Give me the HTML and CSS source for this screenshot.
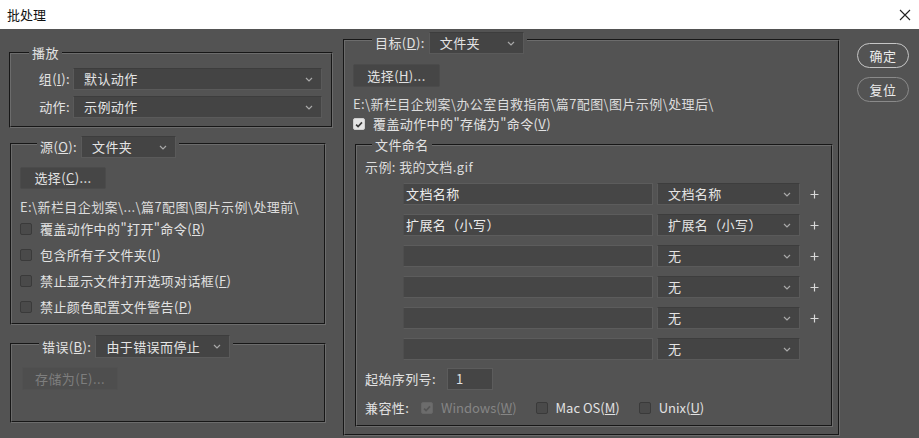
FILE: index.html
```html
<!DOCTYPE html>
<html lang="zh-CN">
<head>
<meta charset="utf-8">
<title>批处理</title>
<link rel="stylesheet" href="styles.css">
</head>
<body>
<header class="titlebar">
  <span class="title">批处理</span>
  <svg class="close" width="12" height="12" viewBox="0 0 12 12"><path d="M1 1L11 11M11 1L1 11" stroke="#222" stroke-width="1.1" fill="none"/></svg>
</header>
<main class="body">
  <div class="col-left">
    <fieldset class="group g-play">
      <legend class="lg-text lg-play">播放</legend>
      <div class="frow">
        <span class="flabel">组(<u>I</u>):</span>
        <div class="select sel-wide"><span>默认动作</span><svg class="chev" width="8" height="5" viewBox="0 0 8 5"><path d="M1 1L4 4L7 1" fill="none" stroke="#a9a9a9" stroke-width="1.2"/></svg></div>
      </div>
      <div class="frow">
        <span class="flabel">动作:</span>
        <div class="select sel-wide"><span>示例动作</span><svg class="chev" width="8" height="5" viewBox="0 0 8 5"><path d="M1 1L4 4L7 1" fill="none" stroke="#a9a9a9" stroke-width="1.2"/></svg></div>
      </div>
    </fieldset>

    <fieldset class="group g-src">
      <legend class="lg-ctl lg-src">
        <span>源(<u>O</u>):</span>
        <div class="select sel-folder"><span>文件夹</span><svg class="chev" width="8" height="5" viewBox="0 0 8 5"><path d="M1 1L4 4L7 1" fill="none" stroke="#a9a9a9" stroke-width="1.2"/></svg></div>
      </legend>
      <div class="btn btn-choose">选择(<u>C</u>)...</div>
      <div class="path">E:\新栏目企划案\...\篇7配图\图片示例\处理前\</div>
      <div class="cbrow"><span class="cb"></span><span>覆盖动作中的"打开"命令(<u>R</u>)</span></div>
      <div class="cbrow"><span class="cb"></span><span>包含所有子文件夹(<u>I</u>)</span></div>
      <div class="cbrow"><span class="cb"></span><span>禁止显示文件打开选项对话框(<u>F</u>)</span></div>
      <div class="cbrow"><span class="cb"></span><span>禁止颜色配置文件警告(<u>P</u>)</span></div>
    </fieldset>

    <fieldset class="group g-err">
      <legend class="lg-ctl lg-err">
        <span>错误(<u>B</u>):</span>
        <div class="select sel-err"><span>由于错误而停止</span><svg class="chev" width="8" height="5" viewBox="0 0 8 5"><path d="M1 1L4 4L7 1" fill="none" stroke="#a9a9a9" stroke-width="1.2"/></svg></div>
      </legend>
      <div class="btn btn-save">存储为(E)...</div>
    </fieldset>
  </div>

  <div class="col-right">
    <fieldset class="group g-target">
      <legend class="lg-ctl lg-target">
        <span>目标(<u>D</u>):</span>
        <div class="select sel-folder"><span>文件夹</span><svg class="chev" width="8" height="5" viewBox="0 0 8 5"><path d="M1 1L4 4L7 1" fill="none" stroke="#a9a9a9" stroke-width="1.2"/></svg></div>
      </legend>
      <div class="btn btn-choose2">选择(<u>H</u>)...</div>
      <div class="path path2">E:\新栏目企划案\办公室自救指南\篇7配图\图片示例\处理后\</div>
      <div class="cbrow cbrow-sm"><span class="cb on"><svg width="11" height="11" viewBox="0 0 11 11"><path d="M2.3 5.6L4.5 7.8L8.8 3.2" fill="none" stroke="#3a3a3a" stroke-width="1.8"/></svg></span><span>覆盖动作中的"存储为"命令(<u>V</u>)</span></div>

      <fieldset class="group g-naming">
        <legend class="lg-text lg-naming">文件命名</legend>
        <div class="example">示例: 我的文档.gif</div>
        <div class="nrows">
          <div class="nrow"><div class="tinput">文档名称</div><div class="select sel-name"><span>文档名称</span><svg class="chev" width="8" height="5" viewBox="0 0 8 5"><path d="M1 1L4 4L7 1" fill="none" stroke="#a9a9a9" stroke-width="1.2"/></svg></div><svg class="plus" width="9" height="9" viewBox="0 0 9 9"><path d="M4.5 0.5V8.5M0.5 4.5H8.5" stroke="#d8d8d8" stroke-width="1.2"/></svg></div>
          <div class="nrow"><div class="tinput">扩展名（小写）</div><div class="select sel-name"><span>扩展名（小写）</span><svg class="chev" width="8" height="5" viewBox="0 0 8 5"><path d="M1 1L4 4L7 1" fill="none" stroke="#a9a9a9" stroke-width="1.2"/></svg></div><svg class="plus" width="9" height="9" viewBox="0 0 9 9"><path d="M4.5 0.5V8.5M0.5 4.5H8.5" stroke="#d8d8d8" stroke-width="1.2"/></svg></div>
          <div class="nrow"><div class="tinput"></div><div class="select sel-name"><span>无</span><svg class="chev" width="8" height="5" viewBox="0 0 8 5"><path d="M1 1L4 4L7 1" fill="none" stroke="#a9a9a9" stroke-width="1.2"/></svg></div><svg class="plus" width="9" height="9" viewBox="0 0 9 9"><path d="M4.5 0.5V8.5M0.5 4.5H8.5" stroke="#d8d8d8" stroke-width="1.2"/></svg></div>
          <div class="nrow"><div class="tinput"></div><div class="select sel-name"><span>无</span><svg class="chev" width="8" height="5" viewBox="0 0 8 5"><path d="M1 1L4 4L7 1" fill="none" stroke="#a9a9a9" stroke-width="1.2"/></svg></div><svg class="plus" width="9" height="9" viewBox="0 0 9 9"><path d="M4.5 0.5V8.5M0.5 4.5H8.5" stroke="#d8d8d8" stroke-width="1.2"/></svg></div>
          <div class="nrow"><div class="tinput"></div><div class="select sel-name"><span>无</span><svg class="chev" width="8" height="5" viewBox="0 0 8 5"><path d="M1 1L4 4L7 1" fill="none" stroke="#a9a9a9" stroke-width="1.2"/></svg></div><svg class="plus" width="9" height="9" viewBox="0 0 9 9"><path d="M4.5 0.5V8.5M0.5 4.5H8.5" stroke="#d8d8d8" stroke-width="1.2"/></svg></div>
          <div class="nrow"><div class="tinput"></div><div class="select sel-name"><span>无</span><svg class="chev" width="8" height="5" viewBox="0 0 8 5"><path d="M1 1L4 4L7 1" fill="none" stroke="#a9a9a9" stroke-width="1.2"/></svg></div></div>
        </div>
        <div class="seqrow"><span class="seqlabel">起始序列号:</span><div class="seqinput">1</div></div>
        <div class="compat">
          <span class="compat-label">兼容性:</span>
          <span class="opt dis"><span class="cb on-dis"><svg width="11" height="11" viewBox="0 0 11 11"><path d="M2.3 5.6L4.5 7.8L8.8 3.2" fill="none" stroke="#555" stroke-width="1.8"/></svg></span><span>Windows(<u>W</u>)</span></span>
          <span class="opt"><span class="cb"></span><span>Mac OS(<u>M</u>)</span></span>
          <span class="opt"><span class="cb"></span><span>Unix(<u>U</u>)</span></span>
        </div>
      </fieldset>
    </fieldset>
  </div>

  <div class="col-btns">
    <div class="pbtn">确定</div>
    <div class="pbtn sec">复位</div>
  </div>
</main>
</body>
</html>
```

FILE: styles.css
```css
* { box-sizing: border-box; }
html, body { margin: 0; padding: 0; }
body {
  width: 919px;
  height: 438px;
  overflow: hidden;
  background: #535353;
  font-family: "Noto Sans CJK SC", "Noto Sans", sans-serif;
  font-size: 13px;
  line-height: 18px;
  color: #e2e2e2;
}
u { text-decoration: underline; text-underline-offset: 1px; }

.titlebar {
  height: 29px;
  background: #ffffff;
  display: flex;
  align-items: center;
  justify-content: space-between;
  padding: 0 8px 0 7px;
  color: #111;
}
.title { font-size: 13px; line-height: 16px; }
.close { display: block; }

.body {
  display: flex;
  align-items: flex-start;
  padding-left: 9px;
  letter-spacing: 0.4px;
}

/* group boxes */
.group {
  margin: 0;
  padding: 0;
  min-width: 0;
  border: 2px groove #6c6c6c;
}
legend { padding: 0 3px; }
.lg-text { line-height: 18px; }
.lg-ctl {
  display: flex;
  align-items: center;
  padding: 6px 3px 0 3px;
  line-height: 18px;
}

.col-left {
  width: 324px;
  margin-top: 15px;
  display: flex;
  flex-direction: column;
}

.g-play { width: 324px; padding: 6px 9px 8px 0; }
.lg-play { margin-left: 18px; }
.frow { display: flex; align-items: center; height: 22px; }
.frow + .frow { margin-top: 6px; }
.flabel { width: 59px; text-align: right; flex: none; }

.select {
  height: 22px;
  background: #444444;
  border: 1px solid #5a5a5a;
  border-top-color: #3d3d3d;
  display: flex;
  align-items: center;
  justify-content: space-between;
  padding: 0 8px 0 10px;
  color: #e4e4e4;
  flex: none;
  white-space: nowrap;
}
.chev { display: block; flex: none; }
.sel-wide { margin-left: 3px; width: 249px; }
.sel-folder { margin-left: 4px; width: 95px; }
.sel-err { margin-left: 4px; width: 135px; height: 23px; }

.g-src { width: 316px; margin: 2px 0 0 1px; padding: 9px 8px 3px 8px; }
.lg-src { margin-left: 17px; }

.btn {
  height: 22px;
  background: #464646;
  border: 1px solid #4b4b4b;
  border-radius: 2px;
  display: flex;
  align-items: center;
  justify-content: center;
  white-space: nowrap;
}
.btn-choose { width: 86px; }
.path { margin-top: 9px; white-space: nowrap; color: #dcdcdc; }

.cbrow { height: 26px; display: flex; align-items: center; white-space: nowrap; }
.cb {
  width: 12px;
  height: 12px;
  flex: none;
  margin-right: 8px;
  background: #4a4a4a;
  border: 1px solid #3a3a3a;
  border-radius: 2px;
  display: flex;
  align-items: center;
  justify-content: center;
}
.cb svg { display: block; }
.cb.on { background: #e6e6e6; border-color: #cfcfcf; }
.cb.on-dis { background: #6c6c6c; border-color: #666; }

.g-err { width: 316px; margin: 4px 0 0 1px; padding: 9px 10px 31px 10px; }
.lg-err { margin-left: 17px; }
.btn-save {
  width: 96px;
  height: 23px;
  background: #4e4e4e;
  border-color: #515151;
  color: #7e7e7e;
}

/* right column */
.col-right { width: 497px; margin: -3px 0 0 10px; }
.g-target { width: 497px; padding: 10px 5px 7px 8px; }
.lg-target { margin-left: 19px; }
.btn-choose2 { width: 87px; height: 23px; }
.path2 { margin-top: 8px; }
.cbrow-sm { height: 18px; margin-top: 2px; }

.g-naming { width: 478px; margin: 3px 0 0 2px; padding: 4px 8px 8px 8px; }
.lg-naming { margin-left: 7px; }
.example { line-height: 18px; color: #dcdcdc; }

.nrows { margin-top: 7px; }
.nrow { display: flex; align-items: center; height: 22px; margin-left: 38px; }
.nrow + .nrow { margin-top: 9px; }
.tinput {
  width: 250px;
  height: 22px;
  flex: none;
  background: #464646;
  border: 1px solid #5c5c5c;
  border-left-color: #4e4e4e;
  padding-left: 2px;
  line-height: 20px;
  color: #ececec;
}
.sel-name { margin-left: 4px; width: 143px; }
.plus { display: block; margin-left: 10px; flex: none; }

.seqrow { display: flex; align-items: center; margin-top: 8px; height: 22px; }
.seqlabel { width: 82px; flex: none; }
.seqinput {
  width: 46px;
  height: 22px;
  background: #454545;
  border: 1px solid #5c5c5c;
  padding-left: 8px;
  line-height: 20px;
}

.compat { display: flex; align-items: center; margin-top: 9px; height: 18px; white-space: nowrap; }
.compat-label { width: 56px; flex: none; }
.opt { display: flex; align-items: center; margin-right: 19px; letter-spacing: 0; }
.opt .cb { margin-right: 8px; }
.opt.dis { color: #858585; }

/* action buttons */
.col-btns { width: 52px; margin: 14px 0 0 17px; display: flex; flex-direction: column; }
.pbtn {
  height: 25px;
  border-radius: 13px;
  border: 1.5px solid #c6c6c6;
  display: flex;
  align-items: center;
  justify-content: center;
  color: #ececec;
  font-size: 13px;
}
.pbtn.sec { border-color: #8a8a8a; margin-top: 9px; }
```
